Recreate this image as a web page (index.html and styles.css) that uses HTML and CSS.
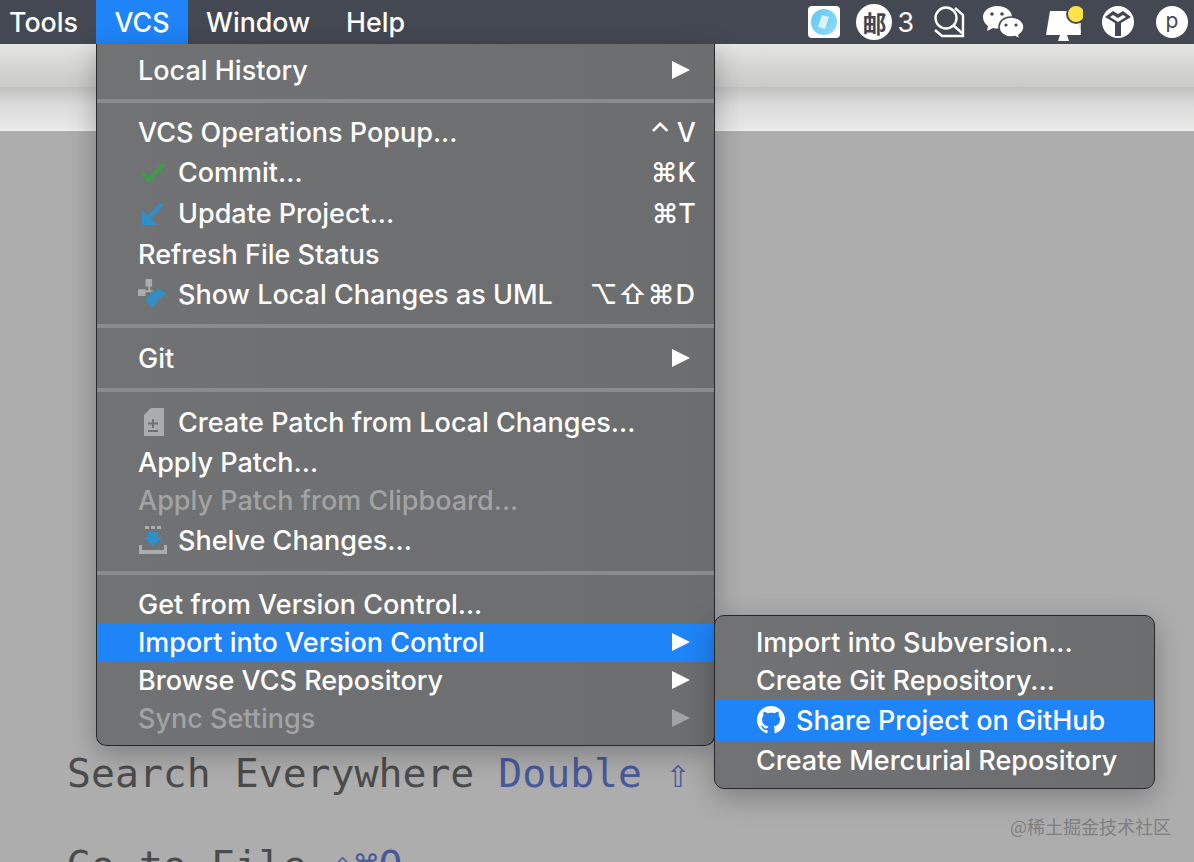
FILE: index.html
```html
<!DOCTYPE html>
<html lang="en">
<head>
  <meta charset="UTF-8">
  <title>VCS menu</title>
  <link rel="stylesheet" href="styles.css">
</head>
<body>
  <div class="screen">
    <header class="menubar">
      <nav class="menubar-left">
        <span class="top-item top-tools">Tools</span>
        <span class="top-item top-active">VCS</span>
        <span class="top-item top-window">Window</span>
        <span class="top-item top-help">Help</span>
      </nav>
      <div class="tray">
        <span class="tray-app"><span class="tray-app-dot"><svg width="14" height="18" viewBox="0 0 14 18"><path d="M5 2l7 2-4 12-7-2z" fill="#d8f3fc"/></svg></span></span>
        <span class="tray-mail">邮</span>
        <span class="tray-count">3</span>
        <svg class="tray-search" width="34" height="34" viewBox="0 0 34 34" fill="none" stroke="#fff" stroke-width="2.4">
          <circle cx="15" cy="13" r="10.5"/>
          <path d="M22 20l9 8M24 3l8 7v21H11l-7-6"/>
        </svg>
        <svg class="tray-wechat" width="42" height="36" viewBox="0 0 42 36">
          <path d="M15 2C7 2 1 7 1 13c0 4 2 7 5 9l-1 5 6-3c2 .5 3 .5 5 .5 8 0 14-5 14-11.500S23 2 15 2z" fill="#fff"/>
          <path d="M29 13c-7 0-12 4.500-12 10s5 10 12 10c1.500 0 3-.2 4-.5l5 2.500-1-4c3-2 5-5 5-8 0-5.500-6-10-13-10z" fill="#fff" stroke="#444852" stroke-width="1.500"/>
          <circle cx="10" cy="10" r="1.800" fill="#444852"/><circle cx="20" cy="10" r="1.800" fill="#444852"/>
          <circle cx="24" cy="21" r="1.600" fill="#444852"/><circle cx="34" cy="21" r="1.600" fill="#444852"/>
        </svg>
        <svg class="tray-monitor" width="38" height="38" viewBox="0 0 38 38">
          <path d="M5 8h27l4 24H1z" fill="#fff"/>
          <path d="M15 32h7l2 6H13z" fill="#fff"/>
          <circle cx="31" cy="11" r="10" fill="#444852"/>
          <path d="M35 20v10" stroke="#fff" stroke-width="1.500"/>
          <circle cx="31" cy="11" r="8" fill="#fde24a"/>
        </svg>
        <svg class="tray-y" width="32" height="32" viewBox="0 0 32 32">
          <circle cx="16" cy="16" r="16" fill="#fff"/>
          <path d="M3 11l8-6 5 3 5-3 8 6-10 6v13h-6V17z" fill="#444852"/>
          <path d="M8 11l8 5 8-5-3-2-5 3-5-3zM11 18l2 1.500v8l-2-1zM21 18l-2 1.500v8l2-1z" fill="#fff"/>
        </svg>
        <span class="tray-user">p</span>
      </div>
    </header>
    <div class="toolbar"></div>
    <div class="tabbar"></div>

    <main class="welcome">
      <p class="hint">Search Everywhere <span class="key">Double ⇧</span></p>
      <p class="hint">Go to File <span class="key">⇧⌘O</span></p>
    </main>

    <div class="menu menu-vcs">
      <div class="row"><span class="label">Local History</span><i class="arrow"></i></div>
      <div class="sep"></div>
      <div class="row"><span class="label">VCS Operations Popup...</span><span class="keys"><span class="caret">⌃</span>V</span></div>
      <div class="row row-41 row-lift">
        <svg class="icon" width="28" height="26" viewBox="0 0 28 26"><path d="M3 14l7 7L25 5" fill="none" stroke="#3f9a4f" stroke-width="4.500"/></svg>
        <span class="label">Commit...</span><span class="keys">⌘K</span>
      </div>
      <div class="row row-41">
        <svg class="icon" width="28" height="26" viewBox="0 0 28 26"><path d="M23 3L7 19" fill="none" stroke="#2f8fc8" stroke-width="4.500"/><path d="M3 9v15h15z" fill="#2f8fc8"/></svg>
        <span class="label">Update Project...</span><span class="keys">⌘T</span>
      </div>
      <div class="row"><span class="label">Refresh File Status</span></div>
      <div class="row">
        <svg class="icon" width="32" height="32" viewBox="0 0 32 32">
          <path d="M8 0h7v8H8zM0 11h8v7H0zM11 8h2v4h-2zM8 12h8v2H8z" fill="#a9adb0"/>
          <path d="M20 9l10 7-10 7v-4h-6v-6h6z" fill="#2f8fc8"/><path d="M8 22l7-7 7 7-7 9z" fill="#2f8fc8"/>
        </svg>
        <span class="label">Show Local Changes as UML</span><span class="keys keys-wide">⌥⇧⌘D</span>
      </div>
      <div class="sep sep-24"></div>
      <div class="row"><span class="label">Git</span><i class="arrow"></i></div>
      <div class="sep sep-24"></div>
      <div class="row">
        <svg class="icon" width="28" height="30" viewBox="0 0 28 30"><path d="M12 1h13v28H5V8z" fill="#a9adb0"/><path d="M14 12v9M9 16.500h10M9 24h10" stroke="#6e6f70" stroke-width="1.800"/></svg>
        <span class="label">Create Patch from Local Changes...</span>
      </div>
      <div class="row"><span class="label">Apply Patch...</span></div>
      <div class="row row-38 row-off"><span class="label">Apply Patch from Clipboard...</span></div>
      <div class="row">
        <svg class="icon" width="30" height="30" viewBox="0 0 30 30">
          <path d="M7 1h4v3H7zM13 1h4v3h-4zM19 1h4v3h-4z" fill="#a9adb0"/>
          <path d="M10 7h10v5h5l-10 9-10-9h5z" fill="#2f8fc8"/>
          <path d="M1 20h3v5h22v-5h3v9H1z" fill="#a9adb0"/>
        </svg>
        <span class="label">Shelve Changes...</span>
      </div>
      <div class="sep sep-26"></div>
      <div class="row row-38"><span class="label">Get from Version Control...</span></div>
      <div class="row row-38 row-active"><span class="label">Import into Version Control</span><i class="arrow"></i></div>
      <div class="row row-38"><span class="label">Browse VCS Repository</span><i class="arrow"></i></div>
      <div class="row row-38 row-off"><span class="label">Sync Settings</span><i class="arrow"></i></div>
    </div>

    <div class="menu menu-sub">
      <div class="row row-38"><span class="label">Import into Subversion...</span></div>
      <div class="row row-38"><span class="label">Create Git Repository...</span></div>
      <div class="row row-42 row-active">
        <svg class="icon" width="28" height="28" viewBox="0 0 16 16"><path fill="#fff" d="M8 0C3.580 0 0 3.580 0 8c0 3.540 2.290 6.530 5.470 7.590.4.070.55-.17.55-.38 0-.19-.01-.82-.01-1.490-2.010.37-2.530-.49-2.690-.94-.09-.23-.48-.94-.82-1.130-.28-.15-.68-.52-.01-.53.630-.01 1.080.58 1.230.82.720 1.210 1.870.87 2.330.66.070-.52.280-.87.510-1.070-1.780-.2-3.640-.89-3.640-3.950 0-.87.310-1.590.82-2.150-.08-.2-.36-1.020.08-2.120 0 0 .67-.21 2.200.82.640-.18 1.320-.27 2-.27s1.360.09 2 .27c1.530-1.040 2.200-.82 2.200-.82.440 1.100.160 1.920.08 2.120.51.560.82 1.270.82 2.150 0 3.070-1.870 3.750-3.650 3.950.29.250.54.730.54 1.480 0 1.070-.01 1.930-.01 2.200 0 .21.150.46.55.38A8.010 8.010 0 0 0 16 8c0-4.420-3.580-8-8-8z"/></svg>
        <span class="label">Share Project on GitHub</span>
      </div>
      <div class="row row-38"><span class="label">Create Mercurial Repository</span></div>
    </div>

    <div class="watermark">@稀土掘金技术社区</div>
  </div>
</body>
</html>
```

FILE: styles.css
```css
* {
  box-sizing: border-box;
}

html, body {
  margin: 0;
  padding: 0;
}

body {
  font-family: Inter, "Noto Sans", sans-serif;
  background-color: #adadad;
}

.screen {
  position: relative;
  width: 1194px;
  height: 862px;
  overflow: hidden;
  background-color: #adadad;
}

/* top bar */
.menubar {
  display: flex;
  justify-content: space-between;
  height: 44px;
  background-color: #444852;
  color: #fff;
  font-size: 26.800px;
  font-weight: 500;
}

.menubar-left {
  display: flex;
}

.top-item {
  display: flex;
  align-items: center;
  height: 44px;
}

.top-tools {
  width: 96px;
  padding-left: 9px;
}

.top-active {
  justify-content: center;
  width: 92px;
  background-color: #1f84f8;
}

.top-window {
  width: 158px;
  padding-left: 18px;
}

.tray {
  display: flex;
  align-items: center;
  padding-right: 6px;
}

.tray-app {
  display: flex;
  align-items: center;
  justify-content: center;
  width: 32px;
  height: 32px;
  border-radius: 4px;
  background-color: #fff;
}

.tray-app-dot {
  display: flex;
  align-items: center;
  justify-content: center;
  width: 26px;
  height: 26px;
  border-radius: 50%;
  background: linear-gradient(135deg, #62c8f0, #8fdcf8);
}

.tray-mail {
  display: flex;
  align-items: center;
  justify-content: center;
  width: 36px;
  height: 36px;
  margin-left: 16px;
  border-radius: 50%;
  background-color: #fff;
  color: #444852;
  font-family: "Noto Sans CJK SC", sans-serif;
  font-size: 24px;
  font-weight: 700;
}

.tray-count {
  margin-left: 5px;
  font-weight: 400;
}

.tray-search {
  margin-left: 17px;
}

.tray-wechat {
  margin-left: 17px;
}

.tray-monitor {
  margin-left: 21px;
}

.tray-y {
  margin-left: 19px;
}

.tray-user {
  display: flex;
  align-items: center;
  justify-content: center;
  width: 32px;
  height: 32px;
  margin-left: 22px;
  padding-bottom: 4px;
  border-radius: 50%;
  background-color: #fff;
  color: #444852;
  font-size: 21px;
  font-weight: 400;
}

.toolbar {
  height: 43px;
  background: linear-gradient(#e4e4e0, #c9c9c8);
}

.tabbar {
  height: 44px;
  border-bottom: 2px solid #ececea;
  background: linear-gradient(#c2c2c2, #dcdcdc 45%, #e8e8e7);
}

/* faded editor hints */
.welcome {
  padding: 617px 0 0 67px;
  color: #4b4b4b;
  font-family: "DejaVu Sans Mono", monospace;
  font-size: 39.800px;
}

.hint {
  height: 92px;
  margin: 0;
  line-height: 50px;
  white-space: nowrap;
}

.key {
  color: #48599a;
}

/* menus */
.menu {
  position: absolute;
  color: #fff;
  font-size: 27px;
  font-weight: 500;
  background: linear-gradient(90deg, #717273, #6c6d6e);
  border: 1px solid #26282b;
  box-shadow: 0 8px 28px rgba(0, 0, 0, 0.28);
}

.menu-vcs {
  top: 44px;
  left: 96px;
  width: 619px;
  height: 702px;
  padding-top: 6px;
  border-top: 0;
  border-radius: 0 0 10px 10px;
}

.menu-sub {
  top: 615px;
  left: 714px;
  width: 441px;
  height: 174px;
  padding-top: 8px;
  border-radius: 10px;
}

.row {
  display: flex;
  align-items: center;
  height: 40px;
  padding: 0 18px 0 41px;
  white-space: nowrap;
}

.row-38 {
  height: 38px;
  padding-bottom: 2px;
}

.row-41 {
  height: 41px;
}

.row-42 {
  height: 42px;
  padding-bottom: 2px;
}

.row-lift {
  padding-bottom: 1px;
}

.row-active {
  background-color: #1f84f8;
}

.row-off {
  color: #a2a3a4;
}

.row-off .arrow {
  border-left-color: #a2a3a4;
}

.icon {
  flex: none;
  width: 30px;
  margin-right: 10px;
}

.label {
  flex: 1;
}

.keys {
  font-family: Inter, "DejaVu Sans", sans-serif;
}

.caret {
  margin-right: 6px;
}

.keys-wide {
  letter-spacing: 1px;
}

.arrow {
  flex: none;
  width: 0;
  height: 0;
  margin-right: 6px;
  border-top: 9px solid transparent;
  border-bottom: 9px solid transparent;
  border-left: 18px solid #fff;
}

.sep {
  display: flex;
  align-items: center;
  height: 22px;
}

.sep::before {
  content: "";
  width: 100%;
  height: 4px;
  background-color: #8a8b8c;
}

.sep-24 {
  height: 24px;
}

.sep-26 {
  height: 26px;
}

.watermark {
  position: absolute;
  right: 23px;
  bottom: 23px;
  color: rgba(120, 120, 120, 0.9);
  font-family: "Noto Sans CJK SC", sans-serif;
  font-size: 18px;
}
```
